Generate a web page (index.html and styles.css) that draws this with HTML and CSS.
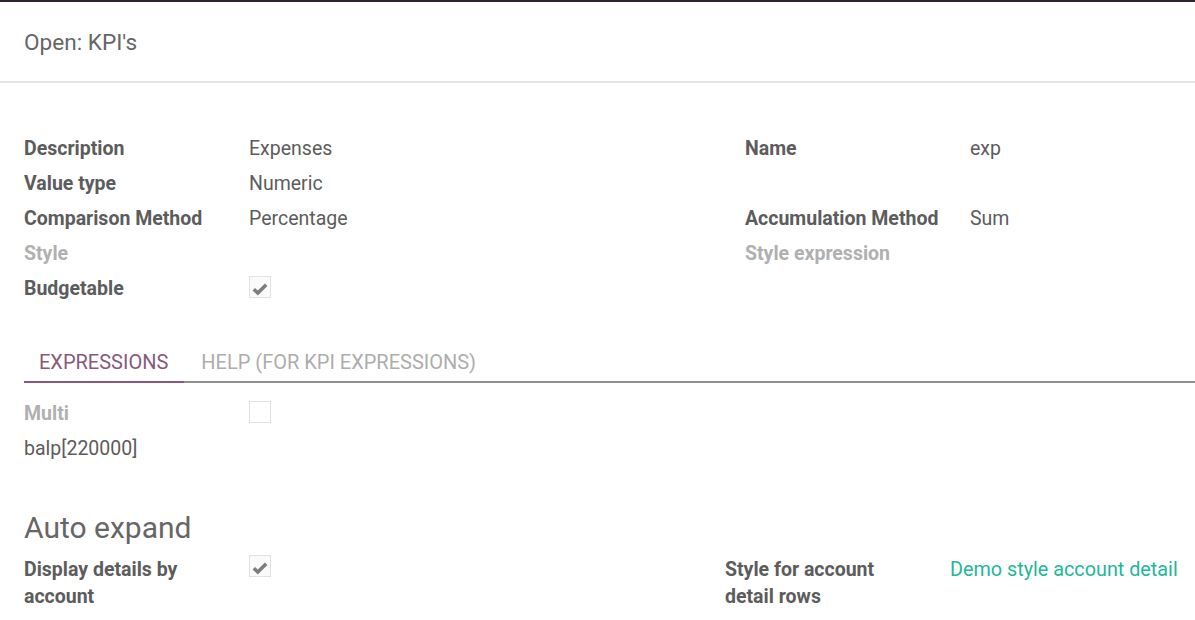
FILE: index.html
```html
<!DOCTYPE html>
<html>
<head>
<meta charset="utf-8">
<link rel="stylesheet" href="styles.css">
</head>
<body>
<div class="backdrop"></div>
<div class="modal">
  <header class="modal-header">
    <h4 class="modal-title">Open: KPI's</h4>
  </header>
  <div class="modal-body">
    <div class="group">
      <div class="label">Description</div>
      <div class="value">Expenses</div>
      <div class="label">Name</div>
      <div class="value">exp</div>

      <div class="label">Value type</div>
      <div class="value">Numeric</div>
      <div class="label"></div>
      <div class="value"></div>

      <div class="label">Comparison Method</div>
      <div class="value">Percentage</div>
      <div class="label">Accumulation Method</div>
      <div class="value">Sum</div>

      <div class="label muted">Style</div>
      <div class="value"></div>
      <div class="label muted">Style expression</div>
      <div class="value"></div>

      <div class="label">Budgetable</div>
      <div class="value"><span class="checkbox checked"><svg viewBox="0 0 22 22" width="22" height="22"><path d="M4.8 13.2 L8.8 17 L17.2 8.8" fill="none" stroke="#7d7d7d" stroke-width="3.6" stroke-linecap="butt" stroke-linejoin="miter"/></svg></span></div>
      <div class="label"></div>
      <div class="value"></div>
    </div>

    <nav class="tabs">
      <a class="tab active">EXPRESSIONS</a>
      <a class="tab">HELP (FOR KPI EXPRESSIONS)</a>
    </nav>

    <div class="tab-pane">
      <div class="group single">
        <div class="label muted">Multi</div>
        <div class="value"><span class="checkbox"></span></div>
      </div>
      <div class="expr">balp[220000]</div>
    </div>

    <h2 class="section-title">Auto expand</h2>
    <div class="group narrow">
      <div class="label">Display details by account</div>
      <div class="value"><span class="checkbox checked"><svg viewBox="0 0 22 22" width="22" height="22"><path d="M4.8 13.2 L8.8 17 L17.2 8.8" fill="none" stroke="#7d7d7d" stroke-width="3.6" stroke-linecap="butt" stroke-linejoin="miter"/></svg></span></div>
      <div class="label">Style for account detail rows</div>
      <div class="value"><a class="link">Demo style account detail</a></div>
    </div>
  </div>
</div>
</body>
</html>
```

FILE: styles.css
```css
html, body {
  margin: 0;
  padding: 0;
  background: #ffffff;
}

body {
  font-family: Roboto, "Liberation Sans", Arial, sans-serif;
  color: #5c5c5c;
  font-size: 19.5px;
  overflow: hidden;
}

.backdrop {
  height: 2px;
  background: #2f2330;
}

.modal-header {
  height: 79px;
  display: flex;
  align-items: center;
  padding: 0 24px;
  border-bottom: 2px solid #e4e4e4;
}

.modal-title {
  margin: 0;
  font-size: 22.6px;
  font-weight: 400;
  color: #666666;
  padding-top: 2px;
}

.modal-body {
  padding: 48px 0 0 24px;
}

.group {
  display: grid;
  grid-template-columns: 225px 496px 225px 1fr;
}

.group.single {
  grid-template-columns: 225px 1fr;
}

.group.narrow {
  grid-template-columns: 225px 476px 225px 1fr;
}

.label {
  font-weight: 700;
  line-height: 27px;
  padding: 4px 16px 4px 0;
  color: #5c5c5c;
}

.label.muted {
  color: #b0b0b0;
}

.value {
  line-height: 27px;
  padding: 4px 0;
  color: #5c5c5c;
  display: flex;
  align-items: flex-start;
}

.checkbox {
  box-sizing: border-box;
  width: 22px;
  height: 22px;
  border: 1px solid #e2e2e2;
  background: #ffffff;
  margin-top: 1px;
  position: relative;
}

.checkbox.checked {
  background: #fafafa;
}

.checkbox svg {
  display: block;
  position: absolute;
  left: -1px;
  top: -1px;
}

.tabs {
  display: flex;
  margin-top: 34px;
  border-bottom: 2px solid #8f8f8f;
  font-size: 20px;
}

.tab {
  display: block;
  padding: 9px 16px 5px 15px;
  line-height: 27px;
  color: #adadad;
  margin-bottom: -2px;
  border-bottom: 2px solid transparent;
}

.tab + .tab {
  margin-left: 2px;
}

.tab.active {
  color: #875a7b;
  border-bottom-color: #875a7b;
}

.tab-pane {
  padding-top: 13px;
}

.expr {
  line-height: 27px;
  padding: 4px 0;
  color: #5c5c5c;
}

.section-title {
  margin: 44px 0 6px 0;
  font-size: 30px;
  font-weight: 400;
  line-height: 36px;
  color: #666666;
}

.group.narrow .label {
  padding-right: 40px;
}

.group.narrow .checkbox {
  margin-top: -1px;
}

.link {
  color: #21b799;
  text-decoration: none;
  font-size: 19.8px;
}
```
